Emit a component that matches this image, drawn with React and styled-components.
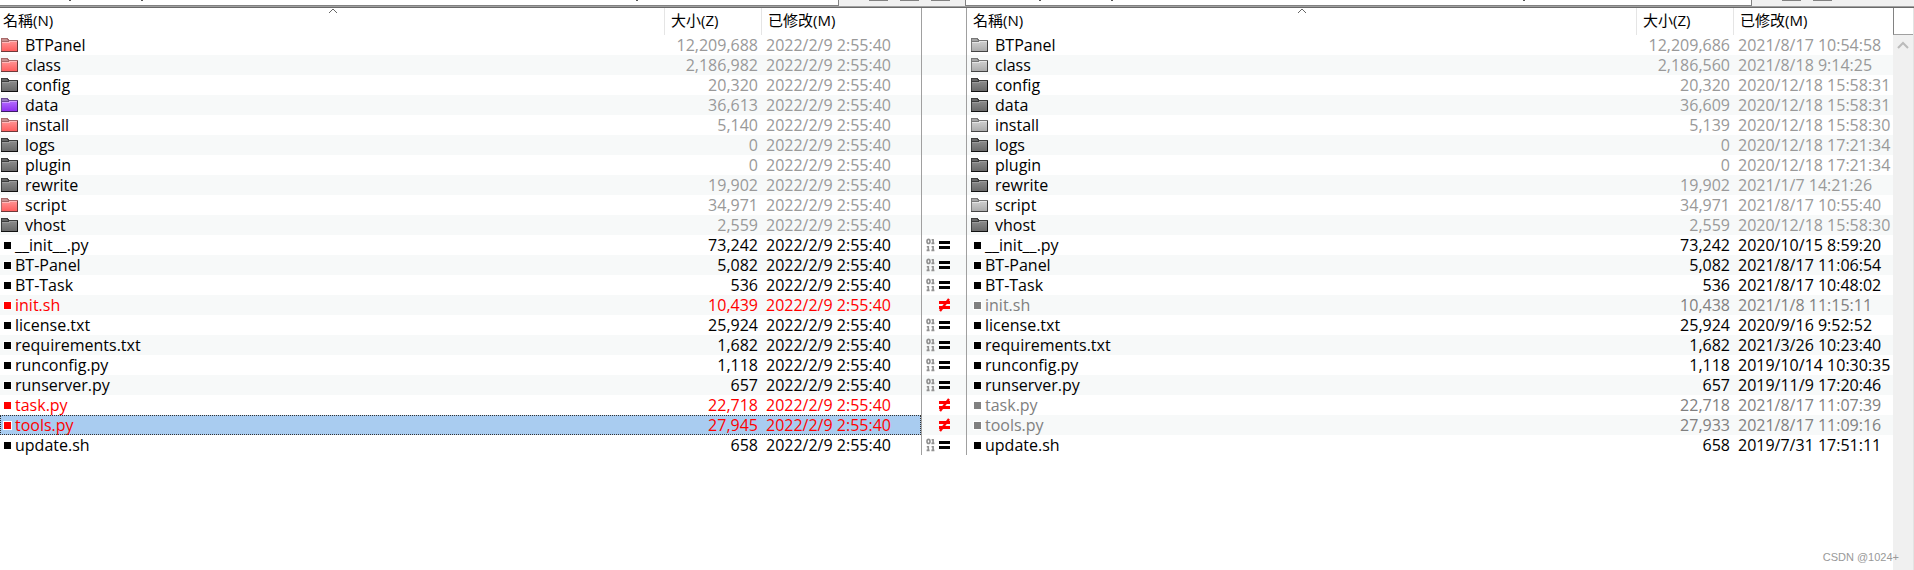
import styled, { createGlobalStyle } from "styled-components";

const GlobalStyle = createGlobalStyle`
  * {
    box-sizing: border-box;
  }
  body {
    margin: 0;
    background: #fff;
    overflow: hidden;
    color: #000;
    font: 16px/20px "Open Sans", "Noto Sans CJK TC", sans-serif;
  }
`;

const Window = styled.main`
  position: relative;
  display: flex;
  flex-direction: column;
  height: 100vh;
`;

const PathBar = styled.div`
  display: flex;
  flex: none;
  height: 8px;
  padding-bottom: 1px;
  background: #f0f0f0;
  border-bottom: 1px solid #696969;
  box-shadow: inset 0 -1px #a0a0a0;
`;

const PathBox = styled.div`
  display: flex;
  flex: ${(p) => p.$grow};
  background: #fff;
  border: solid #828282;
  border-width: 0 1px 1px ${(p) => (p.$first ? 0 : 1)}px;
`;

const PathTail = styled.span`
  width: 2px;
  height: 1px;
  margin-left: ${(p) => p.$space}px;
  background: #555;
`;

const PathTools = styled.div`
  display: flex;
  gap: 12px;
  flex: none;
  width: ${(p) => (p.$last ? 162 : 126)}px;
  padding-left: 30px;
`;

const ToolEdge = styled.span`
  width: 19px;
  height: 1px;
  background: #828282;
`;

const Compare = styled.div`
  display: flex;
  flex: 1;
`;

const Panes = styled.div`
  display: grid;
  grid-template-columns: minmax(0, 922fr) 45px minmax(0, 926fr);
  flex: 1;
  align-items: start;
`;

const Table = styled.table`
  --inset: ${(p) => (p.$divider ? 0 : 3)}px;
  width: 100%;
  table-layout: fixed;
  border-spacing: 0;
  border-right: ${(p) => (p.$divider ? "1px solid #a0a0a0" : "none")};
`;

const NameCol = styled.col``;
const SizeCol = styled.col`
  width: 97px;
`;
const DateCol = styled.col`
  width: 159px;
`;

const Th = styled.th`
  position: relative;
  height: 27px;
  padding: 0 0 3px ${(p) => (p.$name ? "calc(3px + var(--inset))" : "6px")};
  font-size: 15px;
  font-weight: 400;
  text-align: left;
  background: linear-gradient(#e5e5e5, #e5e5e5) right / ${(p) => (p.$last ? 0 : 1)}px 100% no-repeat;
`;

const SortArrow = styled.svg`
  position: absolute;
  top: 0;
  left: calc(50% - 5px);
  width: 10px;
  height: 6px;
`;

const Row = styled.tr`
  height: 20px;
  color: ${(p) => p.$color};
  background: ${(p) => (p.$selected ? "#a9ccf0" : "#fff")};
  outline: ${(p) => (p.$selected ? "1px dotted #333" : "none")};
  outline-offset: -1px;
  &:nth-child(even) {
    background: ${(p) => (p.$selected ? "#a9ccf0" : "#f7f9f9")};
  }
`;

const Td = styled.td`
  height: 20px;
  padding: 0;
  white-space: nowrap;
`;

const Name = styled.div`
  display: flex;
  align-items: center;
  gap: ${(p) => (p.$folder ? 6 : 3)}px;
  height: 20px;
  padding-left: calc(${(p) => (p.$folder ? 1 : 3)}px + var(--inset));
  color: ${(p) => (p.$folder ? "#000" : "inherit")};
`;

const SizeCell = styled(Td)`
  padding-right: 4px;
  text-align: right;
`;

const DateCell = styled(Td)`
  padding-left: 4px;
`;

const FileMark = styled.span`
  flex: none;
  width: 9px;
  height: 9px;
  border: 1px solid #fff;
  background: currentColor;
  background-clip: padding-box;
`;

const Gutter = styled.div`
  border-right: 1px solid #a0a0a0;
  padding-top: 27px;
`;

const GutterCell = styled.div`
  display: flex;
  align-items: center;
  height: 20px;
  padding-left: 4px;
  background: #fff;
  &:nth-child(even) {
    background: #f7f9f9;
  }
`;

const ScrollTrack = styled.div`
  flex: none;
  width: 21px;
  background: #f0f0f0;
  border-right: 1px solid #e3e3e3;
`;

const ScrollHead = styled.div`
  height: 27px;
  border-left: 1px solid #828282;
  border-bottom: 1px solid #a0a0a0;
  background: #fff;
`;

const ScrollUp = styled.button`
  display: flex;
  align-items: center;
  justify-content: center;
  width: 100%;
  height: 20px;
  padding: 0;
  border: 0;
  background: transparent;
`;

const Watermark = styled.div`
  position: absolute;
  right: 15px;
  bottom: 3px;
  color: #999;
  font: 11px/20px "Liberation Sans", Arial, sans-serif;
`;

const FOLDERS = {
  red: { line: "#6e3a3a", rim: "#a86a6a", tab: "#c99090", top: "#ff9494", bottom: "#ff5f5f", shine: "#ffb8b8" },
  dark: { line: "#111", rim: "#3c3c3c", tab: "#666", top: "#8c8c8c", bottom: "#696969", shine: "#9c9c9c" },
  purple: { line: "#3c1c66", rim: "#6b4a94", tab: "#9678bc", top: "#b46cff", bottom: "#8f30ee", shine: "#cf9cff" },
  light: { line: "#444", rim: "#777", tab: "#a4a4a4", top: "#d0d0d0", bottom: "#acacac", shine: "#e4e4e4" },
};

const FILE_COLORS = { same: "#000", newer: "#ff0000", older: "#808080" };

// name, kind of folder or file on each side, sizes, right date
const ROWS = [
  ["BTPanel", "red", "light", "12,209,688", "12,209,686", "2021/8/17 10:54:58"],
  ["class", "red", "light", "2,186,982", "2,186,560", "2021/8/18 9:14:25"],
  ["config", "dark", "dark", "20,320", "20,320", "2020/12/18 15:58:31"],
  ["data", "purple", "dark", "36,613", "36,609", "2020/12/18 15:58:31"],
  ["install", "red", "light", "5,140", "5,139", "2020/12/18 15:58:30"],
  ["logs", "dark", "dark", "0", "0", "2020/12/18 17:21:34"],
  ["plugin", "dark", "dark", "0", "0", "2020/12/18 17:21:34"],
  ["rewrite", "dark", "dark", "19,902", "19,902", "2021/1/7 14:21:26"],
  ["script", "red", "light", "34,971", "34,971", "2021/8/17 10:55:40"],
  ["vhost", "dark", "dark", "2,559", "2,559", "2020/12/18 15:58:30"],
  ["__init__.py", "same", "same", "73,242", "73,242", "2020/10/15 8:59:20"],
  ["BT-Panel", "same", "same", "5,082", "5,082", "2021/8/17 11:06:54"],
  ["BT-Task", "same", "same", "536", "536", "2021/8/17 10:48:02"],
  ["init.sh", "newer", "older", "10,439", "10,438", "2021/1/8 11:15:11"],
  ["license.txt", "same", "same", "25,924", "25,924", "2020/9/16 9:52:52"],
  ["requirements.txt", "same", "same", "1,682", "1,682", "2021/3/26 10:23:40"],
  ["runconfig.py", "same", "same", "1,118", "1,118", "2019/10/14 10:30:35"],
  ["runserver.py", "same", "same", "657", "657", "2019/11/9 17:20:46"],
  ["task.py", "newer", "older", "22,718", "22,718", "2021/8/17 11:07:39"],
  ["tools.py", "newer", "older", "27,945", "27,933", "2021/8/17 11:09:16"],
  ["update.sh", "same", "same", "658", "658", "2019/7/31 17:51:11"],
].map(([name, left, right, leftSize, rightSize, date]) => ({
  name,
  left: { kind: left, size: leftSize, date: "2022/2/9 2:55:40" },
  right: { kind: right, size: rightSize, date },
}));

const FolderIcon = ({ kind }) => {
  const c = FOLDERS[kind];
  const id = `folder-${kind}`;
  return (
    <svg width="18" height="16" viewBox="0 0 18 16" shapeRendering="crispEdges" aria-hidden="true">
      <linearGradient id={id} x1="0" y1="0" x2="0" y2="1">
        <stop offset="0" stopColor={c.top} />
        <stop offset="1" stopColor={c.bottom} />
      </linearGradient>
      <path d="M0 1h7v1h1v1h9v12H0z" fill={c.rim} />
      <path d="M16 4h1v11H0v-1h16z" fill={c.line} />
      <path d="M1 2h5v1h1v1H1z" fill={c.tab} />
      <path d="M1 5h7V4h8v10H1z" fill={`url(#${id})`} />
      <path d="M1 5h7V4h8v1H9v1H1z" fill={c.shine} />
    </svg>
  );
};

const EqualIcon = () => (
  <svg width="26" height="14" viewBox="0 0 26 14" aria-hidden="true">
    <g fill="none" stroke="#909090" strokeWidth="1.6">
      <ellipse cx="2.5" cy="3.4" rx="1.5" ry="2" />
      <path d="M5.6 1.8h1.5v4M5.4 5.4h3M.8 8.8h1.5v4M.6 12.4h3M5.6 8.8h1.5v4M5.4 12.4h3" />
    </g>
    <path d="M13 3h11v3H13zM13 8h11v3H13z" fill="#000" />
  </svg>
);

const NotEqualIcon = () => (
  <svg width="26" height="14" viewBox="0 0 26 14" aria-hidden="true">
    <path d="M13 3h11v3H13zM13 8h11v3H13z" fill="#f00" />
    <path d="M23 1L14 13" stroke="#f00" strokeWidth="2.4" />
  </svg>
);

const FileTable = ({ side, divider, label }) => (
  <Table $divider={divider} aria-label={label}>
    <colgroup>
      <NameCol />
      <SizeCol />
      <DateCol />
    </colgroup>
    <thead>
      <tr>
        <Th $name>
          名稱(N)
          <SortArrow viewBox="0 0 10 6" aria-hidden="true">
            <path d="M1 5l4-4 4 4" fill="none" stroke="#666" />
          </SortArrow>
        </Th>
        <Th>大小(Z)</Th>
        <Th $last>已修改(M)</Th>
      </tr>
    </thead>
    <tbody>
      {ROWS.map((row) => {
        const item = row[side];
        const folder = item.kind in FOLDERS;
        return (
          <Row
            key={row.name}
            $color={folder ? "#999" : FILE_COLORS[item.kind]}
            $selected={side === "left" && row.name === "tools.py"}
          >
            <Td>
              <Name $folder={folder}>
                {folder ? <FolderIcon kind={item.kind} /> : <FileMark />}
                {row.name}
              </Name>
            </Td>
            <SizeCell>{item.size}</SizeCell>
            <DateCell>{item.date}</DateCell>
          </Row>
        );
      })}
    </tbody>
  </Table>
);

const App = () => (
  <Window>
    <GlobalStyle />
    <PathBar>
      <PathBox $grow={840} $first>
        <PathTail $space={69} />
        <PathTail $space={70} />
        <PathTail $space={493} />
      </PathBox>
      <PathTools>
        <ToolEdge />
        <ToolEdge />
        <ToolEdge />
      </PathTools>
      <PathBox $grow={786}>
        <PathTail $space={73} />
        <PathTail $space={70} />
        <PathTail $space={410} />
      </PathBox>
      <PathTools $last>
        <ToolEdge />
        <ToolEdge />
      </PathTools>
    </PathBar>
    <Compare>
      <Panes>
        <FileTable side="left" divider label="Left folder" />
        <Gutter>
          {ROWS.map(({ name, left }) => (
            <GutterCell key={name}>
              {left.kind === "same" && <EqualIcon />}
              {left.kind === "newer" && <NotEqualIcon />}
            </GutterCell>
          ))}
        </Gutter>
        <FileTable side="right" label="Right folder" />
      </Panes>
      <ScrollTrack>
        <ScrollHead />
        <ScrollUp aria-label="Scroll up">
          <svg width="12" height="8" viewBox="0 0 12 8" aria-hidden="true">
            <path d="M1 7l5-5 5 5" fill="none" stroke="#bbb" strokeWidth="2" />
          </svg>
        </ScrollUp>
      </ScrollTrack>
    </Compare>
    <Watermark>CSDN @1024+</Watermark>
  </Window>
);

export default App;
